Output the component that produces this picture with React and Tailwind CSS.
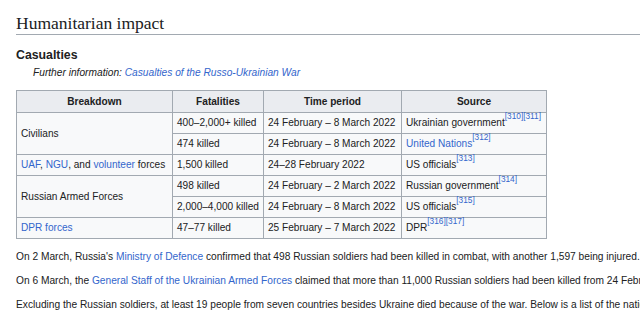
import React from "react";

const L = ({ children }) => <a className="text-[#3366cc]">{children}</a>;
const R = ({ n }) => (
  <sup className="text-[8.3px] text-[#3366cc] leading-none align-[3px]">
    {n.map((x) => `[${x}]`).join("")}
  </sup>
);

const th = "border border-[#a2a9b1] bg-[#eaecf0] font-bold text-center px-[4px] h-[22px] whitespace-nowrap";
const td = "border border-[#a2a9b1] px-[4px] h-[21px] text-left font-normal whitespace-nowrap";

export default function App() {
  return (
    <div className="w-[640px] h-[327px] overflow-hidden bg-white text-[#202122] pl-[16px] font-['Liberation_Sans',Arial,sans-serif]">
      <h2 className="pt-[14px] pb-[2px] border-b border-[#a2a9b1] font-['Liberation_Serif',Georgia,serif] text-[17.5px] leading-[18px]">
        Humanitarian impact
      </h2>
      <h3 className="mt-[12px] font-bold text-[12.3px] leading-[16px]">Casualties</h3>
      <div className="mt-[3px] pl-[17px] italic text-[10.2px] leading-[14px]">
        Further information: <L>Casualties of the Russo-Ukrainian War</L>
      </div>
      <table className="mt-[10px] border-collapse text-[10.1px] bg-[#f8f9fa] table-fixed">
        <colgroup>
          <col className="w-[156px]" />
          <col className="w-[91px]" />
          <col className="w-[138px]" />
          <col className="w-[145px]" />
        </colgroup>
        <thead>
          <tr>
            <th className={th}>Breakdown</th>
            <th className={th}>Fatalities</th>
            <th className={th}>Time period</th>
            <th className={th}>Source</th>
          </tr>
        </thead>
        <tbody>
          <tr>
            <td rowSpan={2} className={td}>Civilians</td>
            <td className={td}>400–2,000+ killed</td>
            <td className={td}>24 February – 8 March 2022</td>
            <td className={td}>Ukrainian government<R n={[310, 311]} /></td>
          </tr>
          <tr>
            <td className={td}>474 killed</td>
            <td className={td}>24 February – 8 March 2022</td>
            <td className={td}><L>United Nations</L><R n={[312]} /></td>
          </tr>
          <tr>
            <td className={td}><L>UAF</L>, <L>NGU</L>, and <L>volunteer</L> forces</td>
            <td className={td}>1,500 killed</td>
            <td className={td}>24–28 February 2022</td>
            <td className={td}>US officials<R n={[313]} /></td>
          </tr>
          <tr>
            <td rowSpan={2} className={td}>Russian Armed Forces</td>
            <td className={td}>498 killed</td>
            <td className={td}>24 February – 2 March 2022</td>
            <td className={td}>Russian government<R n={[314]} /></td>
          </tr>
          <tr>
            <td className={td}>2,000–4,000 killed</td>
            <td className={td}>24 February – 8 March 2022</td>
            <td className={td}>US officials<R n={[315]} /></td>
          </tr>
          <tr>
            <td className={td}><L>DPR forces</L></td>
            <td className={td}>47–77 killed</td>
            <td className={td}>25 February – 7 March 2022</td>
            <td className={td}>DPR<R n={[316, 317]} /></td>
          </tr>
        </tbody>
      </table>
      <div className="text-[10.2px] leading-[14px] whitespace-nowrap">
        <p className="mt-[11px]">
          On 2 March, Russia's <L>Ministry of Defence</L> confirmed that 498 Russian soldiers had been killed in combat, with another 1,597 being injured.
        </p>
        <p className="mt-[10px]">
          On 6 March, the <L>General Staff of the Ukrainian Armed Forces</L> claimed that more than 11,000 Russian soldiers had been killed from 24 February to 6 March.
        </p>
        <p className="mt-[10px]">
          Excluding the Russian soldiers, at least 19 people from seven countries besides Ukraine died because of the war. Below is a list of the nationalities of the deceased.
        </p>
        <p className="mt-[14px] font-bold">Foreign casualties of the 2022 Russian invasion of Ukraine</p>
      </div>
    </div>
  );
}
